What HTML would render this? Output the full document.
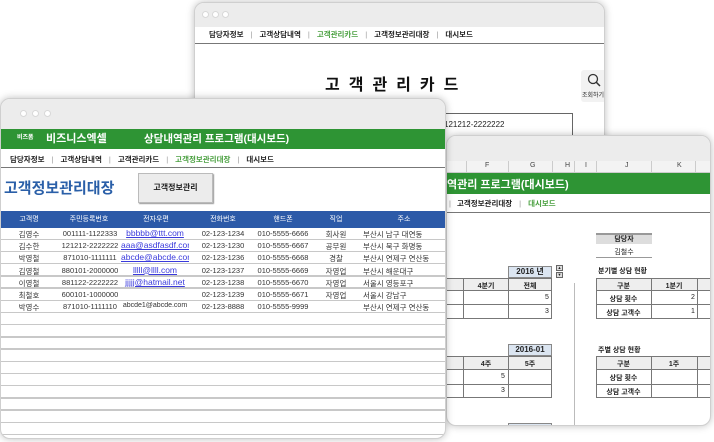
<!DOCTYPE html>
<html><head><meta charset="utf-8">
<style>
*{margin:0;padding:0;box-sizing:border-box}
body{width:714px;height:442px;background:#fff;position:relative;overflow:hidden;font-family:"Liberation Sans","Noto Sans CJK KR",sans-serif;color:#222}
.abs{position:absolute}
.win{position:absolute;background:#fff;border:1px solid #cfcfcf;border-radius:10px;overflow:hidden;box-shadow:0 0 8px rgba(0,0,0,.25)}
.tb{position:absolute;left:0;right:0;top:0;background:#ececec}
.dot{position:absolute;width:7px;height:7px;border-radius:50%;background:#fff;border:1px solid #d8d8d8}
.nav{position:absolute;font-size:7.5px;font-weight:bold;white-space:nowrap;color:#222}
.nav span.s{color:#999;margin:0 7px;font-weight:normal}
.nav .g{color:#4aa040}
.green{position:absolute;background:#2e9434;color:#fff;font-weight:bold}
.t{position:absolute;font-size:7.5px;white-space:nowrap}
.c{text-align:center}
.box{position:absolute;border:1px solid #777}
</style></head><body>

<!-- Window A (back) -->
<div class="win" style="left:194px;top:2px;width:411px;height:200px">
  <div class="tb" style="height:24px"></div>
  <div class="dot" style="left:7px;top:8px"></div><div class="dot" style="left:17px;top:8px"></div><div class="dot" style="left:27px;top:8px"></div>
  <div class="nav" style="left:14px;top:26px">담당자정보<span class="s">|</span>고객상담내역<span class="s">|</span><span class="g">고객관리카드</span><span class="s">|</span>고객정보관리대장<span class="s">|</span>대시보드</div>
  <div class="abs" style="left:0;right:0;top:40px;height:1px;background:#777"></div>
  <div class="abs" style="left:130px;top:68px;font-size:16px;font-weight:bold;letter-spacing:9px;color:#111">고객관리카드</div>
  <div class="abs" style="left:386px;top:67px;width:30px;height:32px;background:#f2f2f2;border-radius:3px"></div>
  <svg class="abs" style="left:391px;top:69px" width="16" height="16" viewBox="0 0 16 16"><circle cx="7" cy="7" r="4.5" fill="none" stroke="#333" stroke-width="1.3"/><path d="M10.2 10.2L14 14" stroke="#333" stroke-width="1.5"/></svg>
  <div class="t" style="left:387px;top:87px;font-size:6px">조회하기</div>
  <div class="abs" style="left:250px;top:110px;width:128px;height:25px;border:1px solid #666;border-bottom:none"></div>
  <div class="t" style="left:249px;top:117px;font-size:8px">121212-2222222</div>
  <div class="abs" style="left:409px;top:0;width:1px;height:200px;background:#888"></div>
</div>

<!-- Window C (right) -->
<div class="win" style="left:446px;top:135px;width:265px;height:291px">
  <div class="tb" style="height:25px"></div>
  <div class="abs" style="left:0;right:0;top:25px;height:12px;background:#f3f3f3;border-bottom:1px solid #ccc"></div>
  <div class="t" style="left:0;top:26px;font-size:7px;color:#444;width:264px">
    <span class="abs" style="left:38px">F</span><span class="abs" style="left:83px">G</span><span class="abs" style="left:118px">H</span><span class="abs" style="left:138px">I</span><span class="abs" style="left:178px">J</span><span class="abs" style="left:230px">K</span>
  </div>
  <div class="abs" style="left:19px;top:25px;width:1px;height:12px;background:#ccc"></div>
  <div class="abs" style="left:61px;top:25px;width:1px;height:12px;background:#ccc"></div>
  <div class="abs" style="left:105px;top:25px;width:1px;height:12px;background:#ccc"></div>
  <div class="abs" style="left:127px;top:25px;width:1px;height:12px;background:#ccc"></div>
  <div class="abs" style="left:149px;top:25px;width:1px;height:12px;background:#ccc"></div>
  <div class="abs" style="left:204px;top:25px;width:1px;height:12px;background:#ccc"></div>
  <div class="abs" style="left:248px;top:25px;width:1px;height:12px;background:#ccc"></div>
  <div class="green" style="left:0;right:0;top:37px;height:21px;font-size:11px;padding:3px 0 0 0">역관리 프로그램(대시보드)</div>
  <div class="nav" style="left:2px;top:62px"><span class="s" style="margin:0 6px 0 0">|</span>고객정보관리대장<span class="s">|</span><span class="g">대시보드</span></div>
  <div class="abs" style="left:0;right:0;top:76px;height:1px;background:#777"></div>
  <div class="abs c" style="left:149px;top:97px;width:56px;height:11px;background:#ddd;border-top:2px solid #999;font-size:7px;font-weight:bold;line-height:9px">담당자</div>
  <div class="t c" style="left:149px;top:111px;width:56px;font-size:7px">김철수</div>
  <div class="abs" style="left:149px;top:121px;width:56px;height:1px;background:#999"></div>
  <div class="abs c" style="left:61px;top:130px;width:44px;height:12px;background:#dbe5f1;border:1px solid #888;font-size:8px;font-weight:bold;line-height:10px">2016 년</div>
  <div class="abs" style="left:109px;top:129px;width:7px;height:6px;border:1px solid #666;background:#ddd;font-size:4px;line-height:4px;text-align:center">▲</div>
  <div class="abs" style="left:109px;top:136px;width:7px;height:6px;border:1px solid #666;background:#ddd;font-size:4px;line-height:4px;text-align:center">▼</div>
  <div class="t" style="left:151px;top:130px;font-weight:bold;font-size:7px">분기별 상담 현황</div>
  <div class="abs" style="left:0;top:142px;width:105px;height:41px;border:1px solid #777;border-left:none"></div>
  <div class="abs" style="left:0;top:142px;width:105px;height:13px;background:#eee;border:1px solid #777;border-left:none"></div>
  <div class="abs" style="left:0;top:168px;width:105px;height:1px;background:#777"></div>
  <div class="abs" style="left:16px;top:142px;width:1px;height:41px;background:#777"></div>
  <div class="abs" style="left:61px;top:142px;width:1px;height:41px;background:#777"></div>
  <div class="t c" style="left:17px;top:145px;width:44px;font-weight:bold;font-size:7px">4분기</div>
  <div class="t c" style="left:61px;top:145px;width:44px;font-weight:bold;font-size:7px">전체</div>
  <div class="t" style="left:98px;top:158px;font-size:7px">5</div>
  <div class="t" style="left:98px;top:172px;font-size:7px">3</div>
  <div class="abs" style="left:127px;top:147px;width:1px;height:150px;background:#bbb"></div>
  <div class="abs" style="left:149px;top:142px;width:120px;height:41px;border:1px solid #777"></div>
  <div class="abs" style="left:149px;top:142px;width:120px;height:13px;background:#eee;border:1px solid #777"></div>
  <div class="abs" style="left:149px;top:168px;width:120px;height:1px;background:#777"></div>
  <div class="abs" style="left:204px;top:142px;width:1px;height:41px;background:#777"></div>
  <div class="abs" style="left:250px;top:142px;width:1px;height:41px;background:#777"></div>
  <div class="t c" style="left:149px;top:145px;width:55px;font-weight:bold;font-size:7px">구분</div>
  <div class="t c" style="left:204px;top:145px;width:46px;font-weight:bold;font-size:7px">1분기</div>
  <div class="t c" style="left:149px;top:158px;width:55px;font-weight:bold;font-size:7px">상담 횟수</div>
  <div class="t c" style="left:149px;top:172px;width:55px;font-weight:bold;font-size:7px">상담 고객수</div>
  <div class="t" style="left:244px;top:158px;font-size:7px">2</div>
  <div class="t" style="left:244px;top:172px;font-size:7px">1</div>
  <div class="abs c" style="left:61px;top:208px;width:44px;height:12px;background:#dbe5f1;border:1px solid #888;font-size:8px;font-weight:bold;line-height:10px">2016-01</div>
  <div class="t" style="left:151px;top:209px;font-weight:bold;font-size:7px">주별 상담 현황</div>
  <div class="abs" style="left:0;top:220px;width:105px;height:42px;border:1px solid #777;border-left:none"></div>
  <div class="abs" style="left:0;top:220px;width:105px;height:14px;background:#eee;border:1px solid #777;border-left:none"></div>
  <div class="abs" style="left:0;top:248px;width:105px;height:1px;background:#777"></div>
  <div class="abs" style="left:16px;top:220px;width:1px;height:42px;background:#777"></div>
  <div class="abs" style="left:61px;top:220px;width:1px;height:42px;background:#777"></div>
  <div class="t c" style="left:17px;top:223px;width:44px;font-weight:bold;font-size:7px">4주</div>
  <div class="t c" style="left:61px;top:223px;width:44px;font-weight:bold;font-size:7px">5주</div>
  <div class="t" style="left:54px;top:237px;font-size:7px">5</div>
  <div class="t" style="left:54px;top:251px;font-size:7px">3</div>
  <div class="abs" style="left:149px;top:220px;width:120px;height:42px;border:1px solid #777"></div>
  <div class="abs" style="left:149px;top:220px;width:120px;height:14px;background:#eee;border:1px solid #777"></div>
  <div class="abs" style="left:149px;top:248px;width:120px;height:1px;background:#777"></div>
  <div class="abs" style="left:204px;top:220px;width:1px;height:42px;background:#777"></div>
  <div class="abs" style="left:250px;top:220px;width:1px;height:42px;background:#777"></div>
  <div class="t c" style="left:149px;top:223px;width:55px;font-weight:bold;font-size:7px">구분</div>
  <div class="t c" style="left:204px;top:223px;width:46px;font-weight:bold;font-size:7px">1주</div>
  <div class="t c" style="left:149px;top:237px;width:55px;font-weight:bold;font-size:7px">상담 횟수</div>
  <div class="t c" style="left:149px;top:251px;width:55px;font-weight:bold;font-size:7px">상담 고객수</div>
  <div class="abs" style="left:61px;top:287px;width:44px;height:4px;background:#dbe5f1;border:1px solid #888"></div>
</div>

<!-- Window B (front) -->
<div class="win" style="left:0;top:98px;width:446px;height:341px">
  <div class="tb" style="height:30px"></div>
  <div class="dot" style="left:19px;top:11px;background:#fff"></div><div class="dot" style="left:31px;top:11px"></div><div class="dot" style="left:43px;top:11px"></div>
  <div class="green" style="left:0;right:0;top:30px;height:20px"></div>
  <div class="t" style="left:16px;top:33px;font-size:6px;color:#fff;font-weight:bold">비즈폼</div>
  <div class="t" style="left:45px;top:31px;font-size:11px;color:#fff;font-weight:bold">비즈니스엑셀</div>
  <div class="t" style="left:143px;top:32px;font-size:10.5px;color:#fff;font-weight:bold">상담내역관리 프로그램(대시보드)</div>
  <div class="nav" style="left:9px;top:55px">담당자정보<span class="s">|</span>고객상담내역<span class="s">|</span>고객관리카드<span class="s">|</span><span class="g">고객정보관리대장</span><span class="s">|</span>대시보드</div>
  <div class="abs" style="left:0;right:0;top:68px;height:1px;background:#777"></div>
  <div class="t" style="left:3px;top:78px;font-size:15px;font-weight:bold;color:#2a5fa8">고객정보관리대장</div>
  <div class="abs c" style="left:137px;top:74px;width:75px;height:30px;background:#ececec;border:1px solid #bbb;box-shadow:1px 1px 1px #999;font-size:8px;font-weight:bold;line-height:28px">고객정보관리</div>
  <div class="abs" style="left:0;right:0;top:112px;height:17px;background:#2c5aa8"></div>
  <div class="t" style="top:115px;left:0;width:445px;color:#fff;font-size:7px">
    <span class="abs c" style="left:8px;width:40px">고객명</span>
    <span class="abs c" style="left:60px;width:56px">주민등록번호</span>
    <span class="abs c" style="left:125px;width:60px">전자우편</span>
    <span class="abs c" style="left:195px;width:54px">전화번호</span>
    <span class="abs c" style="left:255px;width:54px">핸드폰</span>
    <span class="abs c" style="left:318px;width:34px">직업</span>
    <span class="abs c" style="left:375px;width:56px">주소</span>
  </div>
  <div id="rows"></div>
</div>

<script>
var d=[["김영수","001111-1122333","bbbbb@ttt.com","02-123-1234","010-5555-6666","회사원","부산시 남구 대연동"],
["김수한","121212-2222222","aaa@asdfasdf.com","02-123-1230","010-5555-6667","공무원","부산시 북구 화명동"],
["박영철","871010-1111111","abcde@abcde.com","02-123-1236","010-5555-6668","경찰","부산시 연제구 연산동"],
["김영철","880101-2000000","lllll@llll.com","02-123-1237","010-5555-6669","자영업","부산시 해운대구"],
["이영철","881122-2222222","jjjjj@hatmail.net","02-123-1238","010-5555-6670","자영업","서울시 영등포구"],
["최철호","600101-1000000","","02-123-1239","010-5555-6671","자영업","서울시 강남구"],
["박영수","871010-1111110","abcde1@abcde.com","02-123-8888","010-5555-9999","","부산시 연제구 연산동"]];
var h="";
for(var i=0;i<18;i++){var y=129+i*12.2;
 h+='<div class="abs" style="left:0;right:0;top:'+(y+10.5).toFixed(1)+'px;height:1.5px;background:#c8c8c8"></div>';
 if(i<7){var r=d[i];var link=i<5;
 h+='<div class="t" style="top:'+(y+1)+'px;left:0;width:445px;font-size:7.5px;color:#333">'+
 '<span class="abs c" style="left:8px;width:40px">'+r[0]+'</span>'+
 '<span class="abs c" style="left:58px;width:62px">'+r[1]+'</span>'+
 '<span class="abs c" style="left:120px;width:68px;overflow:hidden;'+(link?'color:#3a3adc;text-decoration:underline;font-size:8.5px;top:-1px':'font-size:7px')+'">'+r[2]+'</span>'+
 '<span class="abs c" style="left:195px;width:54px">'+r[3]+'</span>'+
 '<span class="abs c" style="left:253px;width:58px">'+r[4]+'</span>'+
 '<span class="abs c" style="left:318px;width:34px">'+r[5]+'</span>'+
 '<span class="abs" style="left:362px">'+r[6]+'</span></div>';}
}
document.getElementById("rows").innerHTML=h;
</script>
</body></html>
